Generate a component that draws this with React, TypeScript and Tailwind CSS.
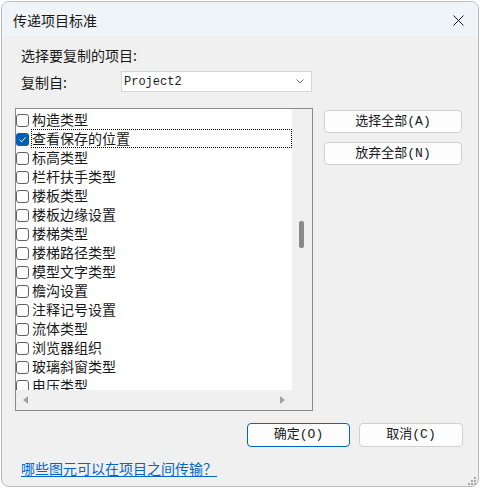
const items = [
  "构造类型",
  "查看保存的位置",
  "标高类型",
  "栏杆扶手类型",
  "楼板类型",
  "楼板边缘设置",
  "楼梯类型",
  "楼梯路径类型",
  "模型文字类型",
  "檐沟设置",
  "注释记号设置",
  "流体类型",
  "浏览器组织",
  "玻璃斜窗类型",
  "电压类型",
];

const btnFont = "font-['Liberation_Mono','Noto_Sans_CJK_SC',monospace]";

function Checkbox({ checked }: { checked: boolean }) {
  if (checked) {
    return (
      <span className="mt-[2px] flex size-[13px] shrink-0 items-center justify-center rounded-[3px] bg-[#005fb8]">
        <svg width="9" height="9" viewBox="0 0 9 9" fill="none">
          <path d="M1.5 4.8 L3.6 6.8 L7.5 2.4" stroke="#ffffff" strokeWidth="1" />
        </svg>
      </span>
    );
  }
  return <span className="mt-[2px] size-[13px] shrink-0 rounded-[3px] border border-[#616161] bg-white" />;
}

export default function App() {
  return (
    <div className="h-[491px] w-[481px] bg-white pl-[1px] pt-[1px] font-['Noto_Sans_CJK_SC',sans-serif] text-[#1a1a1a]">
      <div className="relative flex h-[486px] w-[478px] flex-col overflow-hidden rounded-[8px] border border-[#bcbcbc] bg-[#f0f0f0]">
        {/* title bar */}
        <div className="flex h-[34px] shrink-0 items-center justify-between bg-[#eff4f9] pl-[11px] pr-[14px] pt-[2px]">
          <span className="text-[14px] leading-[18px]">传递项目标准</span>
          <svg width="11" height="11" viewBox="0 0 11 11">
            <path d="M0.5 0.5 L10.5 10.5 M10.5 0.5 L0.5 10.5" stroke="#1a1a1a" strokeWidth="1" />
          </svg>
        </div>

        <div className="mt-[9px] h-[20px] pl-[19px] text-[14px] leading-[20px]">选择要复制的项目:</div>

        <div className="mt-[6px] flex h-[21px] items-center pl-[19px]">
          <span className="w-[100px] text-[14px] leading-[20px]">复制自:</span>
          <div className="flex h-[21px] w-[191px] items-center justify-between border border-[#d6d6d6] bg-white pl-[2px] pr-[7px]">
            <span className="font-['Liberation_Mono',monospace] text-[12px] leading-[16px]">Project2</span>
            <svg width="8" height="5" viewBox="0 0 8 5" fill="none">
              <path d="M0.5 0.5 L4 4 L7.5 0.5" stroke="#6a6a6a" strokeWidth="1" />
            </svg>
          </div>
        </div>

        <div className="mt-[16px] flex pl-[13px]">
          {/* list box */}
          <div className="flex h-[303px] w-[298px] flex-col border border-[#8c8c8c] bg-white">
            <div className="flex h-[281px]">
              <div className="flex-1 overflow-hidden pt-[1px]">
                {items.map((it, i) => (
                  <div key={it} className="flex h-[19px] items-center">
                    <Checkbox checked={i === 1} />
                    <span
                      className={`ml-[2px] flex-1 border text-[14px] leading-[17px] ${
                        i === 1 ? "border-dotted border-black" : "border-transparent"
                      }`}
                    >
                      {it}
                    </span>
                  </div>
                ))}
              </div>
              <div className="w-[20px] bg-[#f0f0f0] pl-[7px] pt-[112px]">
                <div className="h-[27px] w-[5px] rounded-[2px] bg-[#8a8a8a]" />
              </div>
            </div>
            <div className="flex h-[20px]">
              <div className="flex flex-1 items-center justify-between bg-[#f0f0f0] px-[7px]">
                <svg width="5" height="8" viewBox="0 0 5 8">
                  <path d="M5 0 L0 4 L5 8 Z" fill="#a3a3a3" />
                </svg>
                <svg width="5" height="8" viewBox="0 0 5 8">
                  <path d="M0 0 L5 4 L0 8 Z" fill="#a3a3a3" />
                </svg>
              </div>
              <div className="w-[20px] bg-[#f0f0f0]" />
            </div>
          </div>

          {/* side buttons */}
          <div className="ml-[11px] flex flex-col gap-[9px] pt-[2px]">
            <button className={`h-[23px] w-[138px] rounded-[4px] border border-[#d0d0d0] bg-[#fdfdfd] text-[13px] leading-[16px] ${btnFont}`}>
              选择全部(A)
            </button>
            <button className={`h-[23px] w-[138px] rounded-[4px] border border-[#d0d0d0] bg-[#fdfdfd] text-[13px] leading-[16px] ${btnFont}`}>
              放弃全部(N)
            </button>
          </div>
        </div>

        <div className="mt-[12px] flex justify-end gap-[9px] pr-[15px]">
          <button className={`h-[24px] w-[103px] rounded-[4px] border border-[#0067c0] bg-[#fdfdfd] text-[13px] leading-[16px] ${btnFont}`}>
            确定(O)
          </button>
          <button className={`h-[24px] w-[104px] rounded-[4px] border border-[#d0d0d0] bg-[#fdfdfd] text-[13px] leading-[16px] ${btnFont}`}>
            取消(C)
          </button>
        </div>

        <div className="mt-[8px] pl-[19px]">
          <span className="text-[14px] leading-[18px] text-[#0066cc] underline underline-offset-[2px]">
            哪些图元可以在项目之间传输？
          </span>
        </div>

        {/* resize grip */}
        <svg className="absolute bottom-[1px] right-[2px]" width="9" height="9" viewBox="0 0 9 9">
          <rect x="7" y="1" width="2" height="2" fill="#a8a8a8" />
          <rect x="4" y="4" width="2" height="2" fill="#a8a8a8" />
          <rect x="7" y="4" width="2" height="2" fill="#a8a8a8" />
          <rect x="1" y="7" width="2" height="2" fill="#a8a8a8" />
          <rect x="4" y="7" width="2" height="2" fill="#a8a8a8" />
          <rect x="7" y="7" width="2" height="2" fill="#a8a8a8" />
        </svg>
      </div>
    </div>
  );
}
